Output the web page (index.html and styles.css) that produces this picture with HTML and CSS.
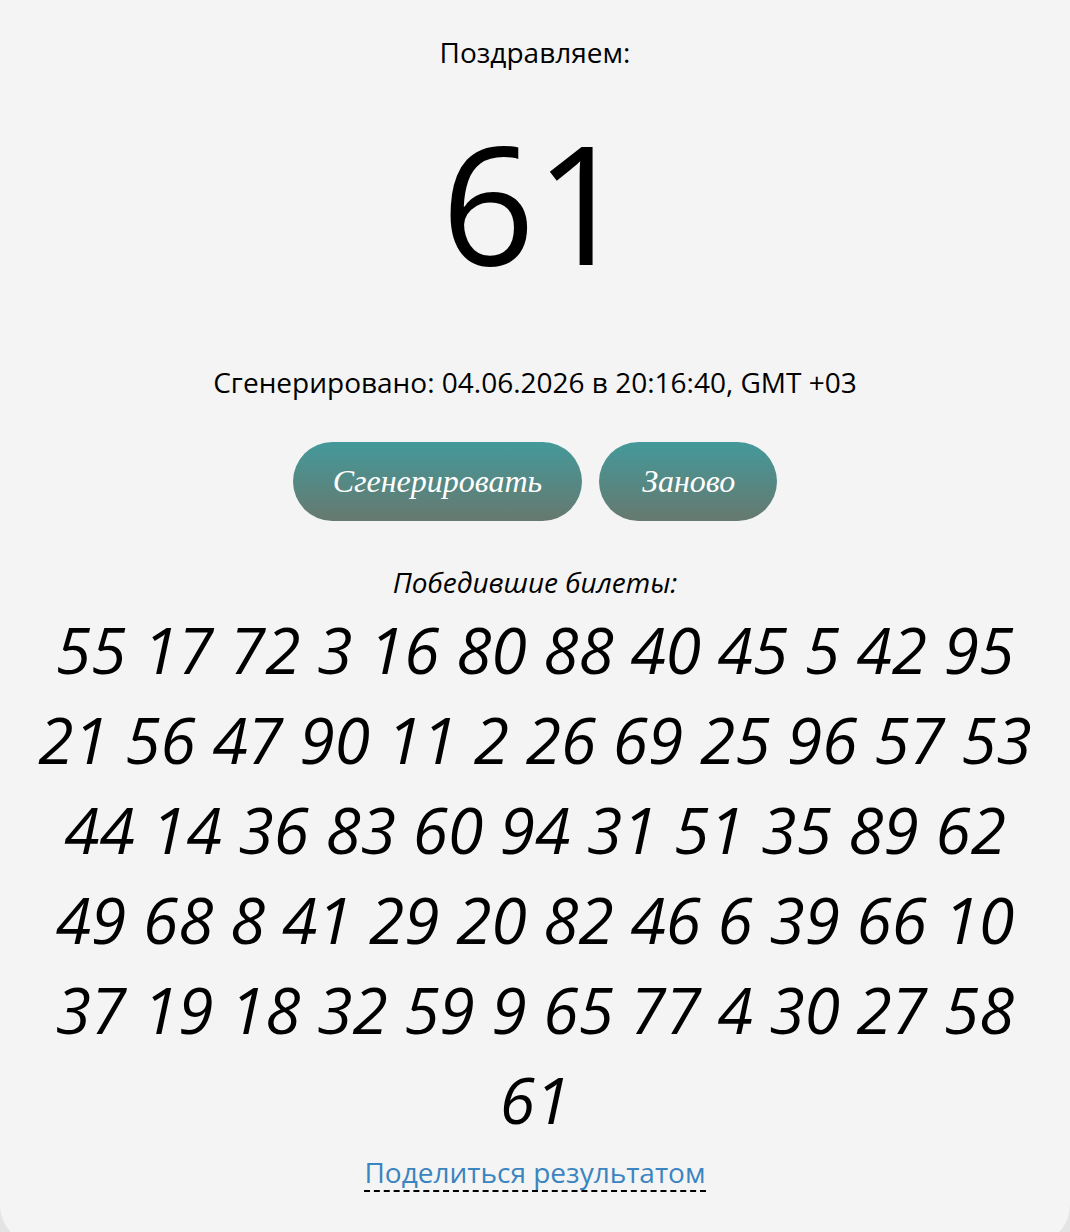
FILE: index.html
```html
<!DOCTYPE html>
<html lang="ru">
<head>
<meta charset="utf-8">
<title>Генератор</title>
<link rel="stylesheet" href="styles.css">
</head>
<body>
<main class="card">
  <p class="congrats">Поздравляем:</p>
  <div class="result">61</div>
  <p class="generated">Сгенерировано: 04.06.2026 в 20:16:40, GMT +03</p>
  <div class="actions">
    <button class="btn" type="button">Сгенерировать</button>
    <button class="btn btn-reset" type="button">Заново</button>
  </div>
  <p class="winners-title">Победившие билеты:</p>
  <p class="winners">55 17 72 3 16 80 88 40 45 5 42 95 21 56 47 90 11 2 26 69 25 96 57 53 44 14 36 83 60 94 31 51 35 89 62 49 68 8 41 29 20 82 46 6 39 66 10 37 19 18 32 59 9 65 77 4 30 27 58 61</p>
  <a class="share" href="#">Поделиться результатом</a>
</main>
</body>
</html>
```
FILE: styles.css
```css
html {
  background: #e4e4e4;
}
body {
  margin: 0;
  font-family: "Open Sans", "Noto Sans", sans-serif;
  color: #000;
}
.card {
  background: #f4f4f4;
  border-radius: 0 0 40px 40px;
  padding: 30px 15px 53px;
  display: flex;
  flex-direction: column;
  align-items: center;
  text-align: center;
}
.congrats {
  margin: 0;
  font-size: 28px;
  line-height: 44px;
}
.result {
  font-size: 164px;
  line-height: 220px;
  margin-top: 18px;
}
.generated {
  margin: 50px 0 0;
  font-size: 28px;
  line-height: 40px;
}
.actions {
  display: flex;
  gap: 17px;
  margin-top: 40px;
}
.btn {
  height: 79px;
  padding: 0 40px;
  border: none;
  border-radius: 40px;
  background: linear-gradient(#44999a, #66796f);
  color: #fff;
  font-family: "Liberation Serif", "DejaVu Serif", serif;
  font-style: italic;
  font-size: 32px;
}
.btn-reset {
  padding: 0 42px 0 43px;
}
.winners-title {
  margin: 41px 0 0;
  font-size: 28px;
  font-style: italic;
  line-height: 40px;
}
.winners {
  margin: 3px 0 0;
  font-size: 64px;
  font-style: italic;
  line-height: 90px;
  max-width: 1005px;
}
.share {
  margin-top: 9px;
  font-size: 28px;
  line-height: 36px;
  color: #3a85c0;
  text-decoration: none;
  border-bottom: 2px dashed #000;
}
```
